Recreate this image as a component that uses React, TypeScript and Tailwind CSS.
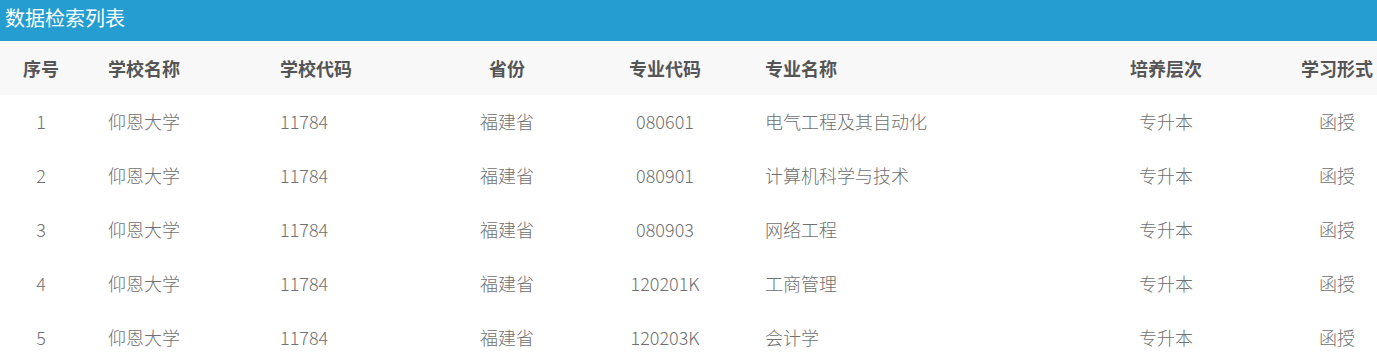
const cols = [
  { label: "序号", w: "w-[82px]", align: "text-center" },
  { label: "学校名称", w: "w-[172px]", align: "text-left pl-[26px]" },
  { label: "学校代码", w: "w-[160px]", align: "text-left pl-[26px]" },
  { label: "省份", w: "w-[186px]", align: "text-center" },
  { label: "专业代码", w: "w-[130px]", align: "text-center" },
  { label: "专业名称", w: "w-[370px]", align: "text-left pl-[35px]" },
  { label: "培养层次", w: "w-[132px]", align: "text-center" },
  { label: "学习形式", w: "w-[210px]", align: "text-center" },
];

const rows = [
  ["1", "仰恩大学", "11784", "福建省", "080601", "电气工程及其自动化", "专升本", "函授"],
  ["2", "仰恩大学", "11784", "福建省", "080901", "计算机科学与技术", "专升本", "函授"],
  ["3", "仰恩大学", "11784", "福建省", "080903", "网络工程", "专升本", "函授"],
  ["4", "仰恩大学", "11784", "福建省", "120201K", "工商管理", "专升本", "函授"],
  ["5", "仰恩大学", "11784", "福建省", "120203K", "会计学", "专升本", "函授"],
];

export default function App() {
  return (
    <div className="w-[1377px] h-[358px] overflow-hidden bg-white font-['Noto_Sans_CJK_SC','Noto_Sans',sans-serif]">
      <div className="h-[41px] bg-[#259dd0] pl-[5px] flex items-center text-[20px] text-white leading-none pb-[6px]">
        数据检索列表
      </div>
      <div className="flex h-[54px] items-center bg-[#f8f8f8] text-[18px] font-bold text-[#555] whitespace-nowrap">
        {cols.map((c) => (
          <div key={c.label} className={`${c.w} ${c.align} shrink-0`}>
            {c.label}
          </div>
        ))}
      </div>
      {rows.map((r) => (
        <div key={r[0]} className="flex h-[54px] items-center pb-[2px] text-[18px] font-light text-[#707070] whitespace-nowrap">
          {r.map((cell, i) => (
            <div key={i} className={`${cols[i].w} ${cols[i].align} shrink-0`}>
              {cell}
            </div>
          ))}
        </div>
      ))}
    </div>
  );
}
